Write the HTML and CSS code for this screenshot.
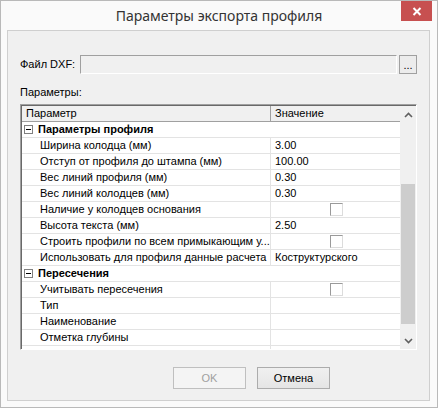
FILE: index.html
```html
<!DOCTYPE html>
<html lang="ru">
<head>
<meta charset="utf-8">
<title>Параметры экспорта профиля</title>
<link rel="stylesheet" href="styles.css">
</head>
<body>
<div class="window">
  <div class="titlebar">
    <span class="spacer"></span>
    <div class="title">Параметры экспорта профиля</div>
    <div class="close">
      <svg width="10" height="9" viewBox="0 0 10 9"><path d="M1.5 1 L8.5 8 M8.5 1 L1.5 8" stroke="#fff" stroke-width="2" fill="none"/></svg>
    </div>
  </div>
  <div class="client">
    <div class="file-row">
      <span class="label">Файл DXF:</span>
      <div class="input"></div>
      <div class="browse">...</div>
    </div>
    <div class="params-label">Параметры:</div>
    <div class="grid">
      <div class="table">
        <div class="head">
          <div class="hc1">Параметр</div>
          <div class="hc2">Значение</div>
        </div>
        <div class="body">
          <div class="row section"><div class="c1"><span class="exp"></span>Параметры профиля</div><div class="c2"></div></div>
          <div class="row"><div class="c1">Ширина колодца (мм)</div><div class="c2">3.00</div></div>
          <div class="row"><div class="c1">Отступ от профиля до штампа (мм)</div><div class="c2">100.00</div></div>
          <div class="row"><div class="c1">Вес линий профиля (мм)</div><div class="c2">0.30</div></div>
          <div class="row"><div class="c1">Вес линий колодцев (мм)</div><div class="c2">0.30</div></div>
          <div class="row"><div class="c1">Наличие у колодцев основания</div><div class="c2 chk"><span class="box"></span></div></div>
          <div class="row"><div class="c1">Высота текста (мм)</div><div class="c2">2.50</div></div>
          <div class="row"><div class="c1">Строить профили по всем примыкающим у...</div><div class="c2 chk"><span class="box"></span></div></div>
          <div class="row"><div class="c1">Использовать для профиля данные расчета</div><div class="c2">Коструктурского</div></div>
          <div class="row section"><div class="c1"><span class="exp"></span>Пересечения</div><div class="c2"></div></div>
          <div class="row"><div class="c1">Учитывать пересечения</div><div class="c2 chk"><span class="box"></span></div></div>
          <div class="row"><div class="c1">Тип</div><div class="c2"></div></div>
          <div class="row"><div class="c1">Наименование</div><div class="c2"></div></div>
          <div class="row"><div class="c1">Отметка глубины</div><div class="c2"></div></div>
          <div class="row"><div class="c1">Диаметр</div><div class="c2"></div></div>
        </div>
      </div>
      <div class="scroll">
        <div class="sbtn">
          <svg width="9" height="6" viewBox="0 0 9 6"><path d="M1 5 L4.5 1.5 L8 5" stroke="#606060" stroke-width="1.6" fill="none"/></svg>
        </div>
        <div class="track"><div class="thumb"></div></div>
        <div class="sbtn">
          <svg width="9" height="6" viewBox="0 0 9 6"><path d="M1 1 L4.5 4.5 L8 1" stroke="#606060" stroke-width="1.6" fill="none"/></svg>
        </div>
      </div>
    </div>
    <div class="buttons">
      <div class="btn disabled">OK</div>
      <div class="btn">Отмена</div>
    </div>
  </div>
</div>
</body>
</html>
```
FILE: styles.css
```css
html, body {
  margin: 0;
  padding: 0;
  background: #fafafa;
}
.window {
  width: 438px;
  height: 408px;
  box-sizing: border-box;
  border: 1px solid #b9b9b9;
  background: #fafafa;
  display: flex;
  flex-direction: column;
  font-family: "Liberation Sans", Arial, sans-serif;
  font-size: 11px;
  color: #000;
}
.titlebar {
  height: 29px;
  display: grid;
  grid-template-columns: 1fr auto 1fr;
  align-items: start;
}
.title {
  font-family: "Noto Sans", "Open Sans", sans-serif;
  font-size: 14px;
  color: #333;
  line-height: 20px;
  padding-top: 5px;
  white-space: nowrap;
}
.close {
  justify-self: end;
  margin-right: 5px;
  width: 31px;
  height: 20px;
  background: #c75050;
  display: flex;
  align-items: center;
  justify-content: center;
}
.client {
  flex: 1;
  margin: 0 7px 6px 6px;
  border: 1px solid #cfcfcf;
  background: #f0f0f0;
  display: flex;
  flex-direction: column;
}
.file-row {
  margin-top: 24px;
  padding-left: 12px;
  height: 19px;
  display: flex;
  align-items: center;
}
.label {
  width: 60px;
  line-height: 13px;
}
.input {
  width: 315px;
  height: 17px;
  border-top: 1px solid #a0a0a0;
  border-left: 1px solid #a0a0a0;
  border-bottom: 1px solid #ffffff;
  border-right: 1px solid #ffffff;
  background: #f0f0f0;
}
.browse {
  margin-left: 2px;
  width: 16px;
  height: 17px;
  border: 1px solid #a0a0a0;
  background: #ececec;
  text-align: center;
  line-height: 19px;
  font-size: 11px;
}
.params-label {
  margin-top: 12px;
  padding-left: 12px;
  line-height: 13px;
}
.grid {
  margin: 5px 0 0 12px;
  width: 397px;
  height: 246px;
  box-sizing: border-box;
  border-top: 1px solid #a0a0a0;
  border-left: 1px solid #a0a0a0;
  border-right: 1px solid #ffffff;
  border-bottom: 1px solid #ffffff;
  box-shadow: inset 1px 1px 0 #696969;
  display: flex;
  background: #fff;
}
.table {
  width: 379px;
  display: flex;
  flex-direction: column;
  overflow: hidden;
  margin-top: 1px;
  margin-left: 1px;
}
.head {
  height: 16px;
  box-sizing: border-box;
  border-bottom: 1px solid #a0a0a0;
  background: #f0f0f0;
  display: flex;
  flex-shrink: 0;
}
.hc1 {
  width: 249px;
  box-sizing: border-box;
  border-right: 1px solid #a0a0a0;
  padding-left: 4px;
  line-height: 15px;
}
.hc2 {
  flex: 1;
  padding-left: 4px;
  line-height: 15px;
}
.body {
  flex: 1;
  overflow: hidden;
}
.row {
  height: 16px;
  box-sizing: border-box;
  border-bottom: 1px solid #e3e3e3;
  display: flex;
}
.c1 {
  width: 249px;
  box-sizing: border-box;
  border-right: 1px solid #e3e3e3;
  padding-left: 18px;
  line-height: 15px;
  white-space: nowrap;
  overflow: hidden;
}
.c2 {
  flex: 1;
  padding-left: 4px;
  line-height: 15px;
  white-space: nowrap;
}
.section .c1 {
  padding-left: 2px;
  font-weight: bold;
  display: flex;
  align-items: center;
  overflow: visible;
  border-right-color: transparent;
}
.exp {
  width: 9px;
  height: 9px;
  box-sizing: border-box;
  border: 1px solid #808080;
  margin-right: 5px;
  position: relative;
  background: #fff;
}
.exp::after {
  content: "";
  position: absolute;
  left: 1px;
  top: 3px;
  width: 5px;
  height: 1px;
  background: #000;
}
.chk {
  display: flex;
  align-items: center;
  justify-content: center;
  padding-left: 0;
}
.box {
  width: 13px;
  height: 13px;
  box-sizing: border-box;
  border-top: 1px solid #9a9a9a;
  border-left: 1px solid #9a9a9a;
  border-right: 1px solid #dcdcdc;
  border-bottom: 1px solid #dcdcdc;
  background: #fff;
  margin-left: 2px;
}
.scroll {
  width: 16px;
  margin-top: 1px;
  background: #f0f0f0;
  display: flex;
  flex-direction: column;
}
.sbtn {
  height: 17px;
  display: flex;
  align-items: center;
  justify-content: center;
}
.track {
  flex: 1;
}
.thumb {
  margin: 61px 1px 0 1px;
  height: 140px;
  background: #cdcdcd;
}
.buttons {
  margin-top: 17px;
  padding-left: 165px;
  display: flex;
  gap: 11px;
}
.btn {
  width: 73px;
  height: 22px;
  box-sizing: border-box;
  border: 1px solid #acacac;
  background: linear-gradient(#f0f0f0, #e5e5e5);
  text-align: center;
  line-height: 20px;
}
.btn.disabled {
  border-color: #bfbfbf;
  background: #f4f4f4;
  color: #a0a0a0;
}
```
